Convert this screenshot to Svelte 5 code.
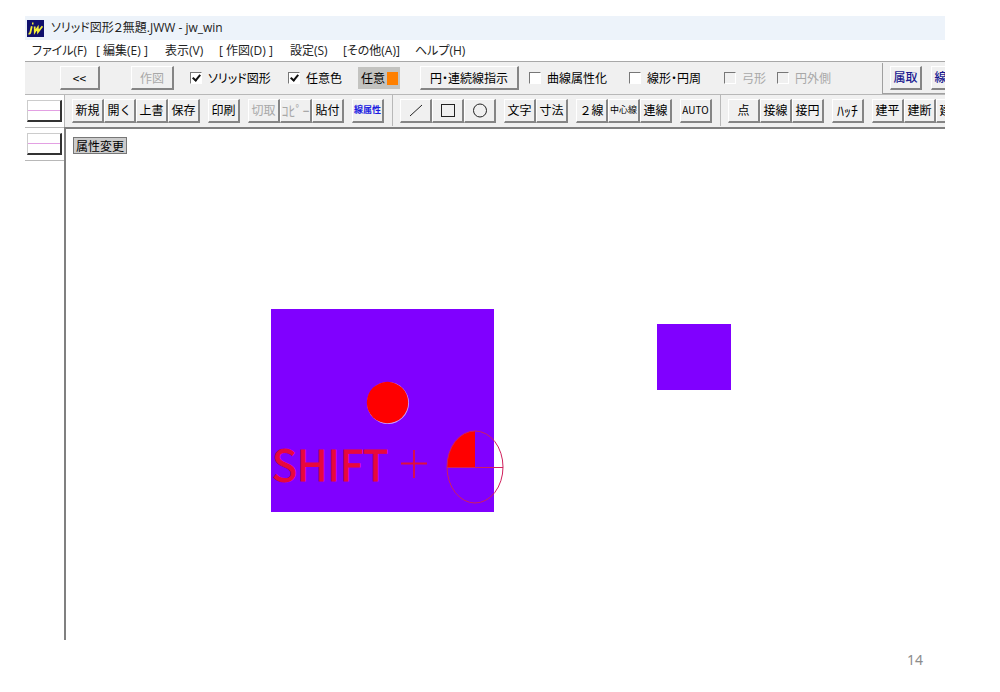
<script lang="ts">
  interface Option {
    label: string;
    checked?: boolean;
    disabled?: boolean;
    width: number;
  }
  interface Tool {
    label: string;
    icon?: "line" | "box" | "circle";
    kind?: string;
  }
  interface Group {
    bordered?: boolean;
    tools: Tool[];
  }

  const menus = [
    { label: "ファイル(F)", width: 49 },
    { label: "[ 編集(E) ]", width: 54 },
    { label: "表示(V)", width: 39 },
    { label: "[ 作図(D) ]", width: 56 },
    { label: "設定(S)", width: 38 },
    { label: "[その他(A)]", width: 57 },
    { label: "ヘルプ(H)", width: 48 },
  ];

  let fillOptions: Option[] = $state([
    { label: "ソリッド図形", checked: true, width: 98 },
    { label: "任意色", checked: true, width: 70 },
  ]);
  let shapeOptions: Option[] = $state([
    { label: "曲線属性化", width: 100 },
    { label: "線形・円周", width: 95 },
    { label: "弓形", disabled: true, width: 53 },
    { label: "円外側", disabled: true, width: 105 },
  ]);

  const names = (...labels: string[]): Tool[] => labels.map((label) => ({ label }));

  const groups: Group[] = [
    { tools: names("新規", "開く", "上書", "保存") },
    { tools: names("印刷") },
    {
      tools: [
        { label: "切取", kind: "off" },
        { label: "ｺﾋﾟｰ", kind: "off kana" },
        { label: "貼付" },
      ],
    },
    { tools: [{ label: "線属性", kind: "attr" }] },
    {
      bordered: true,
      tools: [
        { label: "線", icon: "line" },
        { label: "矩形", icon: "box" },
        { label: "円", icon: "circle" },
      ],
    },
    { tools: names("文字", "寸法") },
    { tools: [{ label: "２線" }, { label: "中心線", kind: "tight" }, { label: "連線" }] },
    { tools: [{ label: "AUTO", kind: "latin" }] },
    { bordered: true, tools: names("点", "接線", "接円") },
    { tools: [{ label: "ﾊｯﾁ", kind: "kana" }] },
    { tools: names("建平", "建断", "建立") },
  ];
</script>

{#snippet optionList(options: Option[])}
  {#each options as option}
    <label class="option" class:off={option.disabled} style="width: {option.width}px">
      <input type="checkbox" bind:checked={option.checked} disabled={option.disabled} />
      <span>{option.label}</span>
    </label>
  {/each}
{/snippet}

<main class="slide">
  <div class="window">
    <header class="titlebar">
      <svg class="logo" viewBox="0 0 17 17" aria-hidden="true">
        <rect width="17" height="17" fill="#10106c" />
        <path
          d="M5 3.5h1.5M4.8 6.2 3.4 12.2Q3 14 1.5 13.6M7.7 6.5 7.8 12 10.8 7.5 11 12 15.4 6.3"
          fill="none"
          stroke="#f4ee38"
          stroke-width="1.8"
        />
      </svg>
      <span>ソリッド図形２無題.JWW - jw_win</span>
    </header>

    <nav class="menubar">
      {#each menus as menu}
        <button class="menu" style="width: {menu.width}px">{menu.label}</button>
      {/each}
    </nav>

    <div class="controls">
      <button class="raised back">&lt;&lt;</button>
      <button class="raised draw" disabled>作図</button>
      {@render optionList(fillOptions)}
      <button class="color">任意<i class="swatch"></i></button>
      <button class="raised series">円・連続線指示</button>
      {@render optionList(shapeOptions)}
      <div class="pickers">
        <button class="raised pick">属取</button>
        <button class="raised pick">線取</button>
      </div>
    </div>

    <div class="body">
      <aside class="side">
        <div class="cell"><button class="linetype" aria-label="線種"></button></div>
        <div class="cell"><button class="linetype" aria-label="線種"></button></div>
      </aside>

      <div class="work">
        <div class="toolbar">
          {#each groups as group}
            <div class="group" class:bordered={group.bordered}>
              {#each group.tools as tool}
                {#if tool.icon}
                  <button class="raised tool" aria-label={tool.label}>
                    <svg class="icon" viewBox="0 0 16 16">
                      {#if tool.icon === "line"}
                        <path d="M2 14 14 3" />
                      {:else if tool.icon === "box"}
                        <rect x="1.5" y="2.5" width="13" height="12" />
                      {:else}
                        <circle cx="8" cy="8.5" r="6.5" />
                      {/if}
                    </svg>
                  </button>
                {:else}
                  <button
                    class="raised tool {tool.kind ?? ''}"
                    disabled={tool.kind?.startsWith("off")}
                  >
                    {tool.label}
                  </button>
                {/if}
              {/each}
            </div>
          {/each}
        </div>

        <div class="canvas">
          <span class="hint">属性変更</span>
          <svg class="drawing" viewBox="0 0 879 511">
            <rect x="205" y="180" width="223" height="203" fill="#8000ff" />
            <rect x="591" y="195" width="74" height="66" fill="#8000ff" />
            <circle cx="322" cy="274" r="21" fill="#c9a0ff" />
            <circle cx="321.5" cy="273.5" r="20.7" fill="#ff0000" />
            <text class="key" x="206" y="352">SHIFT</text>
            <path d="M335 334.5h26M348 321v28" stroke="#e0103c" stroke-width="1.8" />
            <path d="M409 338V302A28 36 0 0 0 381 338Z" fill="#ff0000" />
            <ellipse cx="409" cy="338" rx="28" ry="36" fill="none" stroke="#d0205c" />
            <path d="M381 338.5h56" stroke="#d0205c" />
          </svg>
        </div>
      </div>
    </div>
  </div>
  <footer class="page">14</footer>
</main>

<style>
  :global(body) {
    margin: 0;
    background: #fff;
  }
  .slide {
    padding: 16px 55px 0 25px;
    color: #000;
    font: 12px/16px "Noto Sans CJK JP", sans-serif;
  }
  button {
    margin: 0;
    padding: 0;
    border: 0;
    background: none;
    color: inherit;
    font: inherit;
    white-space: nowrap;
  }
  .window {
    overflow: hidden;
  }
  .titlebar {
    display: flex;
    align-items: center;
    gap: 7px;
    height: 24px;
    padding-left: 2px;
    background: #edf3fa;
    color: #222;
    font-family: "Open Sans", "Noto Sans CJK JP", sans-serif;
    font-feature-settings: "palt";
  }
  .logo {
    width: 17px;
    height: 17px;
  }
  .menubar {
    display: flex;
    gap: 15px;
    height: 21px;
    padding-left: 7px;
    color: #222;
    font-family: "Open Sans", "Noto Sans CJK JP", sans-serif;
    font-feature-settings: "palt";
  }
  .menu {
    text-align: left;
  }
  .controls {
    display: flex;
    align-items: center;
    box-sizing: border-box;
    height: 33px;
    padding-left: 35px;
    border-top: 1px solid #a8a8a8;
    background: #f0f0f0;
    font-feature-settings: "palt";
  }
  .controls > * {
    flex-shrink: 0;
  }
  .raised {
    box-sizing: border-box;
    height: 24px;
    border: 1px solid;
    border-width: 1px 2px 2px 1px;
    border-color: #fff #858585 #858585 #fff;
    background: #f0f0f0;
  }
  .raised:disabled {
    color: #a8a8a8;
  }
  .back {
    width: 40px;
    margin-right: 31px;
  }
  .draw {
    width: 43px;
    margin-right: 16px;
  }
  .option {
    display: flex;
    align-items: center;
    gap: 6px;
    white-space: nowrap;
  }
  .option input {
    appearance: none;
    box-sizing: border-box;
    width: 12px;
    height: 12px;
    margin: 0;
    border: 1px solid #fff;
    border-top-color: #777;
    border-left-color: #777;
    background: #fff;
  }
  .option input:checked::before {
    content: "";
    display: block;
    width: 3px;
    height: 6px;
    margin-left: 3px;
    border: solid #111;
    border-width: 0 2px 2px 0;
    transform: rotate(40deg);
  }
  .option.off {
    color: #a8a8a8;
  }
  .option.off input {
    background: #f0f0f0;
  }
  .color {
    display: flex;
    align-items: center;
    gap: 2px;
    width: 42px;
    height: 22px;
    margin-right: 20px;
    padding-left: 3px;
    background: #c3c3c0;
  }
  .swatch {
    width: 11px;
    height: 13px;
    background: #ff8000;
  }
  .series {
    width: 99px;
    margin-right: 10px;
  }
  .pickers {
    display: flex;
    flex: 1 0 0;
    gap: 9px;
    min-width: 0;
    height: 30px;
    padding-left: 7px;
    border-left: 1px solid #a0a0a0;
    border-bottom: 1px solid #a0a0a0;
    overflow: hidden;
  }
  .pick {
    flex-shrink: 0;
    width: 32px;
    margin-top: 3px;
    color: #1a1a90;
    font-weight: 500;
  }
  .body {
    display: flex;
    border-top: 1px solid #b8b8b8;
  }
  .side {
    flex: none;
    width: 39px;
  }
  .cell {
    box-sizing: border-box;
    height: 33px;
    padding: 5px 2px;
    border-bottom: 1px solid #b8b8b8;
  }
  .linetype {
    display: block;
    box-sizing: border-box;
    width: 35px;
    height: 22px;
    border: 1px solid;
    border-width: 1px 2px 2px 1px;
    border-color: #ccc #333 #333 #ccc;
    background: linear-gradient(#e3a0e3, #e3a0e3) center / 100% 1px no-repeat #fff;
  }
  .work {
    flex: 1;
    min-width: 0;
  }
  .toolbar {
    display: flex;
    gap: 8px;
    height: 32px;
    padding-left: 7px;
    border-left: 1px solid #b8b8b8;
    background: #f0f0f0;
    overflow: hidden;
  }
  .group {
    display: flex;
    flex: none;
    align-items: center;
    height: 31px;
  }
  .group.bordered {
    padding-left: 7px;
    border-left: 1px solid #b8b8b8;
  }
  .tool {
    width: 32px;
    line-height: 20px;
    text-align: center;
  }
  .attr {
    color: #1c1ce0;
    font-size: 9px;
    font-weight: 700;
  }
  .tight {
    font-size: 9px;
  }
  .kana {
    font-size: 14px;
  }
  .latin {
    font-size: 10px;
  }
  .icon {
    display: block;
    width: 16px;
    height: 16px;
    margin: auto;
    fill: none;
    stroke: #222;
  }
  .canvas {
    position: relative;
    border-top: 2px solid #808080;
    border-left: 2px solid #808080;
    background: #fff;
  }
  .hint {
    position: absolute;
    top: 8px;
    left: 7px;
    padding: 0 2px;
    border: 1px solid #777;
    background: #ccc;
    line-height: 15px;
  }
  .drawing {
    display: block;
    width: 100%;
  }
  .key {
    fill: #e8083c;
    stroke: #e8083c;
    font-size: 42px;
  }
  .page {
    padding: 10px 22px 10px 0;
    color: #8c8c8c;
    font: 14px/20px "Noto Sans", sans-serif;
    text-align: right;
  }
</style>
